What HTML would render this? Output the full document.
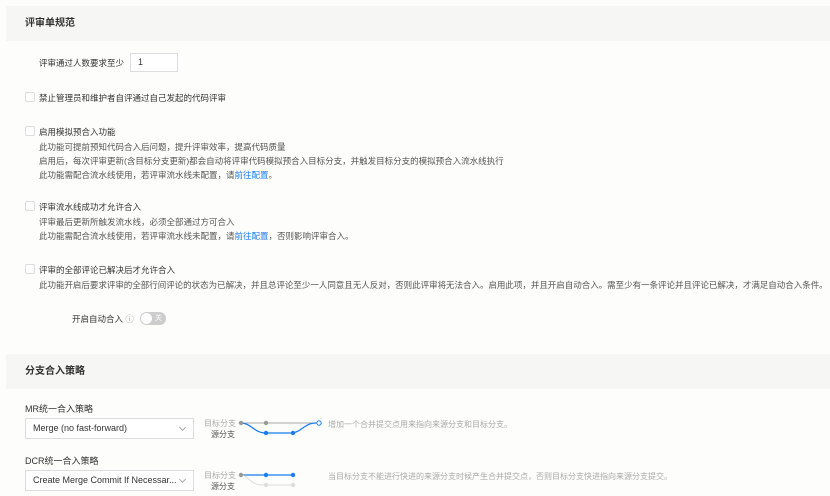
<!DOCTYPE html>
<html><head><meta charset="utf-8"><style>
*{margin:0;padding:0;box-sizing:border-box}
body{width:830px;height:496px;background:#fdfdfb;font-family:"Liberation Sans","Noto Sans CJK SC",sans-serif;color:#333;position:relative;overflow:hidden;font-size:8.5px}
.a{position:absolute;white-space:nowrap}
.hd{position:absolute;left:6px;width:824px;background:#f6f6f4;font-weight:bold;font-size:10px;padding-left:19px}
.cb{position:absolute;left:25px;width:10px;height:10px;border:1px solid #ddd;border-radius:2px;background:#fff}
.d{color:#555}
.l{color:#1a7cf0}
.sel{position:absolute;left:25px;width:169px;height:21px;border:1px solid #ddd;background:#fff;font-size:9px;padding-left:7px;line-height:19px;color:#333}
.sel:after{content:"";position:absolute;right:8px;top:6px;width:4px;height:4px;border-right:1px solid #aaa;border-bottom:1px solid #aaa;transform:rotate(45deg)}
.g{color:#aaa;font-size:8px}
</style></head><body>
<div class="hd" style="top:6px;height:35px;line-height:35px">评审单规范</div>
<div class="a" style="left:39px;top:57px">评审通过人数要求至少</div>
<div class="a" style="left:130px;top:53px;width:48px;height:19px;border:1px solid #ddd;background:#fff;padding-left:7px;line-height:17px;font-size:9px">1</div>
<div class="cb" style="top:92px"></div><div class="a" style="left:39px;top:92px">禁止管理员和维护者自评通过自己发起的代码评审</div>
<div class="cb" style="top:126px"></div><div class="a" style="left:39px;top:126px">启用模拟预合入功能</div>
<div class="a d" style="left:39px;top:141px">此功能可提前预知代码合入后问题，提升评审效率，提高代码质量</div>
<div class="a d" style="left:39px;top:155px">启用后，每次评审更新(含目标分支更新)都会自动将评审代码模拟预合入目标分支，并触发目标分支的模拟预合入流水线执行</div>
<div class="a d" style="left:39px;top:169px">此功能需配合流水线使用，若评审流水线未配置，请<span class="l">前往配置</span>。</div>
<div class="cb" style="top:201px"></div><div class="a" style="left:39px;top:201px">评审流水线成功才允许合入</div>
<div class="a d" style="left:39px;top:216px">评审最后更新所触发流水线，必须全部通过方可合入</div>
<div class="a d" style="left:39px;top:230px">此功能需配合流水线使用，若评审流水线未配置，请<span class="l">前往配置</span>，否则影响评审合入。</div>
<div class="cb" style="top:264px"></div><div class="a" style="left:39px;top:264px">评审的全部评论已解决后才允许合入</div>
<div class="a d" style="left:39px;top:279px;letter-spacing:-0.02px">此功能开启后要求评审的全部行间评论的状态为已解决，并且总评论至少一人同意且无人反对，否则此评审将无法合入。启用此项，并且开启自动合入。需至少有一条评论并且评论已解决，才满足自动合入条件。</div>
<div class="a" style="left:72px;top:313px">开启自动合入 <span style="color:#999">ⓘ</span></div>
<div class="a" style="left:140px;top:312px;width:26px;height:13px;border-radius:7px;background:#ccc"><div style="position:absolute;left:1px;top:1px;width:11px;height:11px;border-radius:50%;background:#fff"></div><span style="position:absolute;left:15px;top:1px;font-size:7px;color:#fff">关</span></div>
<div class="hd" style="top:354px;height:35px;line-height:35px">分支合入策略</div>
<div class="a" style="left:25px;top:402px;font-size:9px">MR统一合入策略</div>
<div class="sel" style="top:418px">Merge (no fast-forward)</div>
<div class="a g" style="left:204px;top:418px">目标分支</div>
<div class="a" style="left:211px;top:429px;font-size:8px;color:#555">源分支</div>
<svg class="a" style="left:236px;top:418px" width="90" height="20"><path d="M5 5H30M30 5H84" stroke="#aaa" stroke-width="1" fill="none"/><path d="M5 5C15 5 18 15 30 15H55C65 15 68 5 80 5" stroke="#1a7cf0" stroke-width="1.3" fill="none"/><circle cx="5" cy="5" r="2.2" fill="#999"/><circle cx="30" cy="5" r="2.2" fill="#999"/><circle cx="30" cy="15" r="2.2" fill="#1a7cf0"/><circle cx="57" cy="15" r="2.2" fill="#1a7cf0"/><circle cx="83" cy="5" r="2.2" fill="#fff" stroke="#1a7cf0" stroke-width="1"/></svg>
<div class="a g" style="left:328px;top:419px">增加一个合并提交点用来指向来源分支和目标分支。</div>
<div class="a" style="left:25px;top:454px;font-size:9px">DCR统一合入策略</div>
<div class="sel" style="top:470px">Create Merge Commit If Necessar...</div>
<div class="a g" style="left:204px;top:470px">目标分支</div>
<div class="a" style="left:211px;top:481px;font-size:8px;color:#555">源分支</div>
<svg class="a" style="left:236px;top:470px" width="90" height="20"><path d="M5 5H57" stroke="#1a7cf0" stroke-width="1.3" fill="none"/><path d="M5 5C12 5 15 15 25 15H57" stroke="#ddd" stroke-width="1" fill="none"/><circle cx="5" cy="5" r="2.2" fill="#999"/><circle cx="30" cy="5" r="2.2" fill="#1a7cf0"/><circle cx="57" cy="5" r="2.2" fill="#1a7cf0"/><circle cx="30" cy="15" r="2.2" fill="#ddd"/><circle cx="57" cy="15" r="2.2" fill="#ddd"/></svg>
<div class="a g" style="left:328px;top:471px">当目标分支不能进行快进的来源分支时候产生合并提交点，否则目标分支快进指向来源分支提交。</div>
</body></html>
